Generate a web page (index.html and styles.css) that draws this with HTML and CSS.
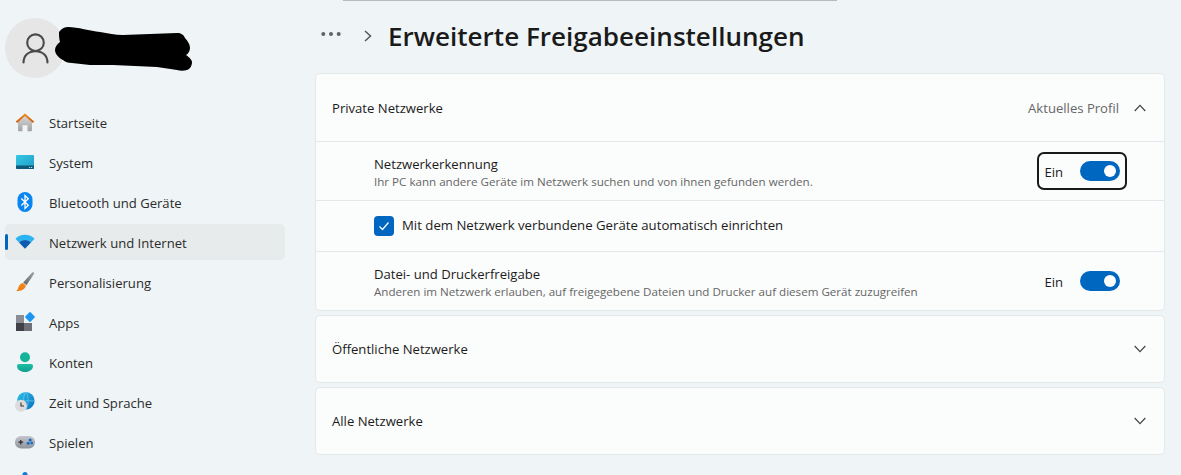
FILE: index.html
```html
<!DOCTYPE html>
<html lang="de">
<head>
<meta charset="utf-8">
<title>Erweiterte Freigabeeinstellungen</title>
<link rel="stylesheet" href="styles.css">
</head>
<body>
<svg class="defs" width="0" height="0" aria-hidden="true">
  <defs>
    <linearGradient id="gHouse" x1="0" y1="0" x2="0" y2="1"><stop offset="0" stop-color="#d9d9d9"/><stop offset="1" stop-color="#a3a3a3"/></linearGradient>
    <linearGradient id="gRoof" x1="0" y1="0" x2="0" y2="1"><stop offset="0" stop-color="#f08a1d"/><stop offset="1" stop-color="#d65a04"/></linearGradient>
    <linearGradient id="gSys" x1="0" y1="0" x2="1" y2="1"><stop offset="0" stop-color="#35c8e4"/><stop offset="1" stop-color="#1d9cc8"/></linearGradient>
    <linearGradient id="gTeal" x1="0" y1="0" x2="0" y2="1"><stop offset="0" stop-color="#1cbfa5"/><stop offset="1" stop-color="#10a08f"/></linearGradient>
    <linearGradient id="gGlobe" x1="0" y1="0" x2="1" y2="1"><stop offset="0" stop-color="#2cc3e6"/><stop offset="1" stop-color="#0a6fc2"/></linearGradient>
    <linearGradient id="gPad" x1="0" y1="0" x2="0" y2="1"><stop offset="0" stop-color="#c3c6cc"/><stop offset="1" stop-color="#8f939b"/></linearGradient>
    <linearGradient id="gBrush" x1="1" y1="0" x2="0" y2="1"><stop offset="0" stop-color="#a5a5a5"/><stop offset="1" stop-color="#5f6368"/></linearGradient>
  </defs>
</svg>
<div class="window">
  <aside class="sidebar">
    <div class="profile">
      <div class="avatar">
        <svg width="27" height="31" viewBox="0 0 28 32" fill="none" stroke="#4a4a4a" stroke-width="2.2" stroke-linecap="round"><circle cx="14" cy="10" r="8.6"/><path d="M1.600 30.500c0-7 5-11.700 12.400-11.700s12.400 4.700 12.400 11.700"/></svg>
      </div>
      <svg class="redaction" width="137" height="44" viewBox="0 0 137 44"><path d="M4 5C7 1 10 0 13 0c10 0 22 4 32 5 8 1 15 3 23 3l54-2c4 0 7 2 8 5 3 3 5 7 5 10 0 3-2 6-4 7 3 2 6 5 6 7 0 4-2 7-5 8-3 1-7 1-10 0l-20-3-44-2H35l-18-2c-4 0-7-1-9-3-4-2-8-6-8-10 0-3 2-6 5-8-1-3-1-7-1-10z" fill="#000"/></svg>
    </div>
    <nav class="nav">
      <a class="nav-item"><svg class="ico" width="20" height="20" viewBox="0 0 20 20"><path d="M3 9.200 10 3l7 6.200V18.500a.8.8 0 0 1-.8.8h-3.700v-6h-5v6H3.800a.8.8 0 0 1-.8-.8z" fill="url(#gHouse)"/><path d="M.8 9.600 10 1.500l9.200 8.100-1.300 1.300L10 4 2.100 10.900z" fill="url(#gRoof)"/></svg><span class="nav-text">Startseite</span></a>
      <a class="nav-item"><svg class="ico" width="20" height="20" viewBox="0 0 20 20"><rect x="1" y="3" width="18" height="14" rx="1" fill="url(#gSys)"/><path d="M1 13.500h18V16a1 1 0 0 1-1 1H2a1 1 0 0 1-1-1z" fill="#0e5878"/><rect x="14" y="15" width="1.200" height="1" fill="#b9d9e6"/><rect x="16" y="15" width="1.200" height="1" fill="#b9d9e6"/></svg><span class="nav-text">System</span></a>
      <a class="nav-item"><svg class="ico" width="20" height="20" viewBox="0 0 20 20"><rect x="2.500" y="0" width="15" height="20" rx="7.500" fill="#0a84f0"/><path d="m6.300 6.500 7 6.800L10 16.500V3.500l3.300 3.200-7 6.800" fill="none" stroke="#fff" stroke-width="1.300"/></svg><span class="nav-text">Bluetooth und Geräte</span></a>
      <a class="nav-item active"><svg class="ico" width="20" height="20" viewBox="0 0 20 20"><path d="M.4 6.800C2.800 4.300 6.200 2.800 10 2.800s7.200 1.500 9.600 4L16 10.500a8.500 8.500 0 0 0-12 0z" fill="#2ab4f0"/><path d="M4 10.400a8.500 8.500 0 0 1 12 0L10 16.800z" fill="#0b5cae"/></svg><span class="nav-text">Netzwerk und Internet</span></a>
      <a class="nav-item"><svg class="ico" width="20" height="20" viewBox="0 0 20 20"><path d="M17.400.300c1-.6 2.200.5 1.700 1.500L11.500 13.300 8.200 10.500z" fill="url(#gBrush)"/><path d="M7.800 10.900 11 13.700c-.8 3-3.700 5.300-9.800 5.500 1.600-1.300 1.800-2.800 2.500-4.600.6-1.800 2.200-3.300 4.100-3.700z" fill="#f0821c"/></svg><span class="nav-text">Personalisierung</span></a>
      <a class="nav-item"><svg class="ico" width="20" height="20" viewBox="0 0 20 20"><rect x="1" y="3" width="8" height="8" fill="#8a8d93"/><rect x="1" y="11" width="8" height="8" fill="#3f4146"/><rect x="9" y="11" width="8" height="8" fill="#6d7076"/><rect x="11.300" y="1.300" width="7.400" height="7.400" rx=".8" transform="rotate(45 15 5)" fill="#1b94f2"/></svg><span class="nav-text">Apps</span></a>
      <a class="nav-item"><svg class="ico" width="20" height="20" viewBox="0 0 20 20"><circle cx="10" cy="5.200" r="5" fill="#16b39a"/><path d="M2 14a2 2 0 0 1 2-2h12a2 2 0 0 1 2 2c0 3.500-3.600 6-8 6s-8-2.500-8-6z" fill="url(#gTeal)"/></svg><span class="nav-text">Konten</span></a>
      <a class="nav-item"><svg class="ico" width="20" height="20" viewBox="0 0 20 20"><circle cx="10.800" cy="8.800" r="8.800" fill="url(#gGlobe)"/><path d="M2 8.800h17.600M10.800 0c-3 3-3 14 0 17.600M10.800 0c3 3 3 14 0 17.600" fill="none" stroke="#7fd3f0" stroke-width=".6"/><circle cx="6" cy="13.800" r="6" fill="#dcdcdc"/><path d="M6 10.500v3.500h3" fill="none" stroke="#333" stroke-width="1.100"/></svg><span class="nav-text">Zeit und Sprache</span></a>
      <a class="nav-item"><svg class="ico" width="20" height="20" viewBox="0 0 20 20"><rect x="0" y="4" width="20" height="12.500" rx="6" fill="url(#gPad)"/><path d="M3.500 10.200h4.600M5.800 7.900v4.600" stroke="#26282c" stroke-width="1.200"/><circle cx="15.200" cy="8" r="1.500" fill="#0f6cc8"/><circle cx="13.200" cy="11.300" r="1.500" fill="#0f6cc8"/><circle cx="16.700" cy="11" r="1.300" fill="#0f6cc8"/></svg><span class="nav-text">Spielen</span></a>
      <a class="nav-item"><svg class="ico" width="20" height="20" viewBox="0 0 20 20"><circle cx="10" cy="2.500" r="2.500" fill="#0f7ad8"/><path d="M3 6.500h14M10 6.500v6l-3.500 7M10 12.500l3.500 7" stroke="#0f7ad8" stroke-width="2" fill="none"/></svg></a>
    </nav>
  </aside>
  <main class="content">
    <div class="top-edge"></div>
    <header class="breadcrumb">
      <svg class="dots" width="24" height="6" viewBox="0 0 24 6" fill="#5f6468"><circle cx="3.300" cy="3" r="2"/><circle cx="11" cy="3" r="2"/><circle cx="18.700" cy="3" r="2"/></svg>
      <svg class="crumb-chevron" width="10" height="14" viewBox="0 0 10 14" fill="none" stroke="#55595d" stroke-width="1.500"><path d="m2 2 5.500 5L2 12"/></svg>
      <h1 class="title">Erweiterte Freigabeeinstellungen</h1>
    </header>
    <section class="card">
      <div class="row row-head">
        <span class="head-label">Private Netzwerke</span>
        <span class="status">Aktuelles Profil</span>
        <svg class="chev" width="12" height="8" viewBox="0 0 12 8" fill="none" stroke="#444" stroke-width="1.200"><path d="M.7 7 6 1.300 11.300 7"/></svg>
      </div>
      <div class="row row-sub">
        <div class="text-block">
          <div class="label">Netzwerkerkennung</div>
          <div class="desc">Ihr PC kann andere Geräte im Netzwerk suchen und von ihnen gefunden werden.</div>
        </div>
        <div class="toggle-wrap focused"><span class="toggle-text">Ein</span><span class="toggle"><span class="knob"></span></span></div>
      </div>
      <div class="row row-check">
        <span class="checkbox"><svg width="12" height="10" viewBox="0 0 12 10" fill="none" stroke="#fff" stroke-width="1.200"><path d="m1.500 5.500 3 3 6-7"/></svg></span>
        <span class="check-label">Mit dem Netzwerk verbundene Geräte automatisch einrichten</span>
      </div>
      <div class="row row-sub last">
        <div class="text-block">
          <div class="label">Datei- und Druckerfreigabe</div>
          <div class="desc">Anderen im Netzwerk erlauben, auf freigegebene Dateien und Drucker auf diesem Gerät zuzugreifen</div>
        </div>
        <div class="toggle-wrap"><span class="toggle-text">Ein</span><span class="toggle"><span class="knob"></span></span></div>
      </div>
    </section>
    <section class="card">
      <div class="row row-head closed">
        <span class="head-label">Öffentliche Netzwerke</span>
        <svg class="chev" width="12" height="8" viewBox="0 0 12 8" fill="none" stroke="#444" stroke-width="1.200"><path d="M.7 1 6 6.700 11.300 1"/></svg>
      </div>
    </section>
    <section class="card">
      <div class="row row-head closed">
        <span class="head-label">Alle Netzwerke</span>
        <svg class="chev" width="12" height="8" viewBox="0 0 12 8" fill="none" stroke="#444" stroke-width="1.200"><path d="M.7 1 6 6.700 11.300 1"/></svg>
      </div>
    </section>
  </main>
</div>
</body>
</html>
```
FILE: styles.css
```css
* { box-sizing: border-box; }
html, body { margin: 0; height: 100%; overflow: hidden; }
body {
  background: #eff4f6;
  color: #1b1b1b;
  font-family: "Open Sans", "Noto Sans", "Liberation Sans", sans-serif;
  font-size: 13.1px;
}
.defs { display: block; height: 0; }
.window { display: flex; height: 475px; overflow: hidden; }

.sidebar { width: 315px; flex: none; padding: 18px 30px 0 5px; }
.profile { display: flex; align-items: flex-start; height: 85px; }
.avatar {
  width: 60px; height: 60px; flex: none; border-radius: 50%;
  background: #e6e6e6; display: flex; align-items: center; justify-content: center;
}
.redaction { margin: 9px 0 0 -10px; flex: none; }
.nav { display: flex; flex-direction: column; gap: 4px; margin-top: 1px; }
.nav-item {
  position: relative; display: flex; align-items: center; gap: 14px;
  height: 36px; padding-left: 10px; border-radius: 5px; color: #2b2b2b;
}
.nav-text { padding-top: 2px; }
.nav-item.active { background: #e8ebec; }
.nav-item.active::before {
  content: ""; position: absolute; left: 0; top: 10px;
  width: 3px; height: 16px; border-radius: 2px; background: #0067c0;
}
.ico { flex: none; }

.content { flex: none; width: 850px; position: relative; }
.top-edge {
  width: 494px; height: 1px; margin-left: 28px; background: #b9bcbd;
}
.breadcrumb { display: flex; align-items: center; height: 72px; padding-bottom: 3px; }
.dots { margin-left: 5px; margin-bottom: 3px; }
.crumb-chevron { margin-left: 19px; margin-top: 1px; }
.title { margin: 0 0 0 15px; font-size: 26.05px; font-weight: 600; color: #1a1a1a; line-height: 36px; }

.card {
  background: #fbfcfc; border: 1px solid #e5e8e9; border-radius: 5px;
  margin-bottom: 4px; overflow: hidden;
}
.row { display: flex; align-items: center; border-bottom: 1px solid #e5e8e9; }
.row:last-child { border-bottom: 0; }
.row-head { height: 68px; padding: 0 18px 0 16px; }
.row-head.closed { height: 66px; }
.head-label { flex: 1; }
.status { color: #666; margin-right: 15px; }
.row-sub { height: 59px; padding: 0 44px 0 58px; justify-content: space-between; }
.row-sub.last { height: 58px; }
.text-block { display: flex; flex-direction: column; gap: 1px; padding-top: 2px; }
.label { line-height: 18px; }
.desc { font-size: 11.6px; line-height: 16px; color: #666; }
.row-check { height: 51px; padding-left: 58px; gap: 8px; }
.check-label { padding-bottom: 2px; font-size: 13.2px; }
.checkbox {
  width: 20px; height: 20px; border-radius: 4px; background: #0067c0;
  display: flex; align-items: center; justify-content: center;
}
.toggle-wrap { position: relative; display: flex; align-items: center; gap: 17px; }
.toggle-text { padding-top: 2px; }
.toggle-wrap.focused::after {
  content: ""; position: absolute; left: -7px; right: -7px; top: -9px; bottom: -9px;
  border: 2px solid #1a1a1a; border-radius: 7px;
}
.toggle {
  width: 40px; height: 20px; border-radius: 10px; background: #0067c0;
  display: flex; align-items: center; justify-content: flex-end; padding-right: 4px;
}
.knob { width: 12px; height: 12px; border-radius: 50%; background: #fff; }
.chev { flex: none; }
```
